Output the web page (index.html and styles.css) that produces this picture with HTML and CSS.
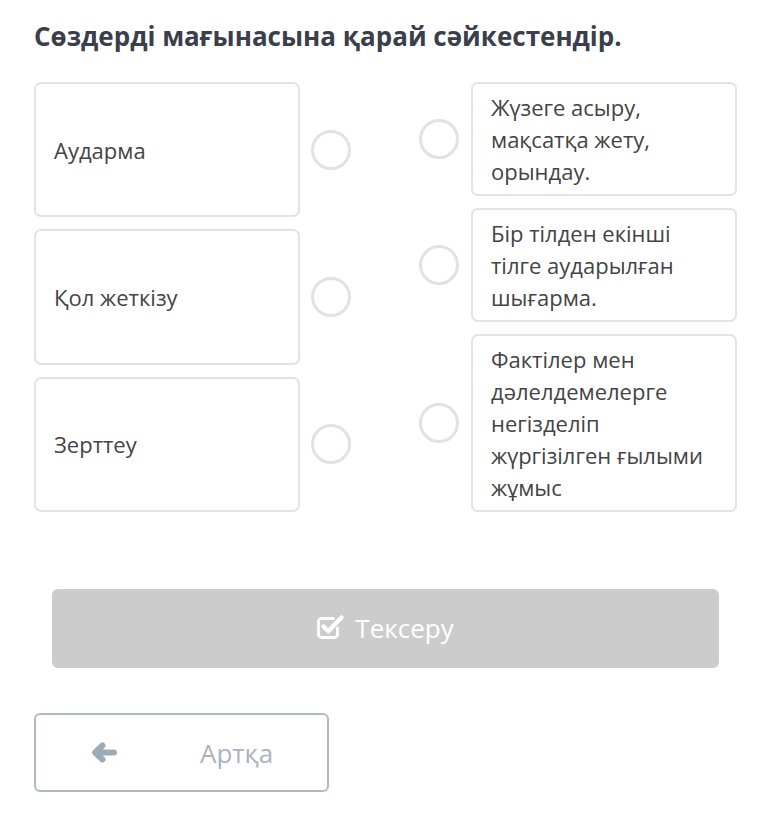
FILE: index.html
```html
<!DOCTYPE html>
<html lang="kk">
<head>
<meta charset="utf-8">
<link rel="stylesheet" href="styles.css">
</head>
<body>
<main class="page">
  <h1 class="title">Сөздерді мағынасына қарай сәйкестендір.</h1>
  <div class="match">
    <div class="col col-left">
      <div class="row"><div class="card card-left">Аударма</div><span class="dot"></span></div>
      <div class="row"><div class="card card-left">Қол жеткізу</div><span class="dot"></span></div>
      <div class="row"><div class="card card-left">Зерттеу</div><span class="dot"></span></div>
    </div>
    <div class="col col-right">
      <div class="row"><span class="dot"></span><div class="card card-right">Жүзеге асыру, мақсатқа жету, орындау.</div></div>
      <div class="row"><span class="dot"></span><div class="card card-right">Бір тілден екінші тілге аударылған шығарма.</div></div>
      <div class="row"><span class="dot"></span><div class="card card-right">Фактілер мен дәлелдемелерге негізделіп жүргізілген ғылыми жұмыс</div></div>
    </div>
  </div>
  <div class="actions">
    <button class="check" type="button">
      <svg class="check-icon" width="27" height="26" viewBox="0 0 27 26" aria-hidden="true">
        <path d="M20.5 14v6.5a3 3 0 0 1-3 3H4.5a3 3 0 0 1-3-3V7.5a3 3 0 0 1 3-3h12" fill="none" stroke="#fff" stroke-width="2.8" stroke-linecap="round"/>
        <path d="M6.5 12.5l4.8 4.8L24.5 3.5" fill="none" stroke="#fff" stroke-width="4.2" stroke-linecap="round" stroke-linejoin="round"/>
      </svg>
      <span class="check-label">Тексеру</span>
    </button>
    <button class="back" type="button">
      <svg class="back-icon" width="27" height="21" viewBox="0 0 27 21" aria-hidden="true">
        <path d="M11.5 3.5 L4.2 10.5 L11.5 17.5 M5.5 10.5 H23" fill="none" stroke="#9aabb9" stroke-width="6" stroke-linecap="round" stroke-linejoin="round"/>
      </svg>
      <span class="back-label">Артқа</span>
    </button>
  </div>
</main>
</body>
</html>
```
FILE: styles.css
```css
html, body {
  margin: 0;
  padding: 0;
  background: #ffffff;
}

.page {
  padding: 20px 35px 30px 34px;
  font-family: "Open Sans", "Noto Sans", sans-serif;
  color: #444444;
}

.title {
  margin: 0 0 30px 0;
  font-size: 26px;
  line-height: 32px;
  font-weight: 700;
  color: #3a3f4b;
}

.match {
  display: flex;
  justify-content: space-between;
  align-items: stretch;
}

.col {
  display: flex;
  flex-direction: column;
  gap: 12px;
}

.col-left {
  width: 317px;
}

.col-left .row {
  flex: 1;
}

.col-right {
  width: 318px;
}

.row {
  display: flex;
  align-items: center;
  gap: 11px;
}

.col-right .row {
  gap: 12px;
}

.card {
  box-sizing: border-box;
  width: 267px;
  border: 2px solid #e3e3e3;
  border-radius: 7px;
  background: #fff;
  font-size: 22px;
  line-height: 32px;
  color: #444;
}

.card-left {
  align-self: stretch;
  display: flex;
  align-items: center;
  padding: 0 18px;
}

.card-right {
  padding: 7px 14px 7px 18px;
}

.dot {
  box-sizing: border-box;
  flex: none;
  width: 40px;
  height: 40px;
  border: 3px solid #e0e2e6;
  border-radius: 50%;
}

.actions {
  display: flex;
  flex-direction: column;
  align-items: flex-start;
  margin-top: 77px;
}

.check {
  box-sizing: border-box;
  margin-left: 18px;
  width: 667px;
  height: 79px;
  border: none;
  border-radius: 6px;
  background: #cccccc;
  display: flex;
  align-items: center;
  justify-content: center;
  gap: 11px;
  font-family: "Open Sans", sans-serif;
  padding: 0;
}

.check-icon {
  margin-top: -3px;
}

.check-label {
  color: #ffffff;
  font-size: 26px;
  font-weight: 400;
  margin-top: -2px;
}

.back {
  box-sizing: border-box;
  margin-top: 45px;
  width: 295px;
  height: 79px;
  border: 2px solid #aebbc6;
  border-radius: 6px;
  background: #fff;
  display: flex;
  align-items: center;
  padding: 0 0 0 55px;
  font-family: "Open Sans", sans-serif;
}

.back-label {
  margin-left: 82px;
  color: #a9b4bf;
  font-size: 26px;
  font-weight: 400;
}
```
